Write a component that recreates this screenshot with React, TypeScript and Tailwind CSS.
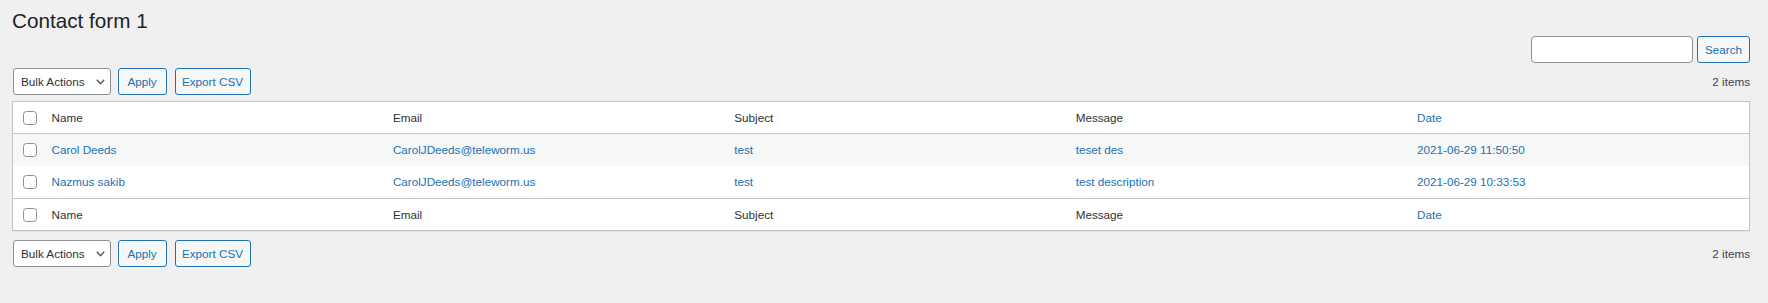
import { ChangeEvent, useState } from 'react';

interface Entry {
  id: number;
  name: string;
  email: string;
  subject: string;
  message: string;
  date: string;
}

const entries: Entry[] = [
  { id: 1, name: 'Carol Deeds', email: 'CarolJDeeds@teleworm.us', subject: 'test', message: 'teset des', date: '2021-06-29 11:50:50' },
  { id: 2, name: 'Nazmus sakib', email: 'CarolJDeeds@teleworm.us', subject: 'test', message: 'test description', date: '2021-06-29 10:33:53' },
];

function Checkbox() {
  return (
    <input
      type="checkbox"
      className="appearance-none block w-[14px] h-[14px] m-0 bg-white border border-[#8c8f94] rounded-[3.5px] cursor-pointer"
    />
  );
}

function Tablenav({ count }: { count: number }) {
  return (
    <div className="flex items-center h-[27px]">
      <div className="relative ml-px mr-[6.5px]">
        <select className="appearance-none w-[98px] h-[27px] pl-[7px] pr-[22px] bg-white border border-[#8c8f94] rounded-[3px] text-[11.7px] text-[#2c3338] outline-none">
          <option>Bulk Actions</option>
          <option>Delete</option>
        </select>
        <svg className="absolute right-[6px] top-[11px] pointer-events-none" width="9" height="6" viewBox="0 0 9 6" fill="none">
          <path d="M0.8 0.8 L4.5 4.8 L8.2 0.8" stroke="#50575e" strokeWidth="1.4" />
        </svg>
      </div>
      <button className="w-[49px] h-[27px] mr-[8px] bg-[#f6f7f7] border border-[#2271b1] rounded-[3px] text-[11.7px] text-[#2271b1]">
        Apply
      </button>
      <button className="w-[76px] h-[27px] bg-[#f6f7f7] border border-[#2271b1] rounded-[3px] text-[11.7px] text-[#2271b1]">
        Export CSV
      </button>
      <span className="ml-auto text-[11.7px] text-[#3c434a]">{count} items</span>
    </div>
  );
}

function HeadRow() {
  return (
    <tr className="h-[32px] text-left text-[#2c3338]">
      <th className="pl-[9.5px] align-middle font-normal"><Checkbox /></th>
      <th className="px-[9px] align-middle font-normal">Name</th>
      <th className="px-[9px] align-middle font-normal">Email</th>
      <th className="px-[9px] align-middle font-normal">Subject</th>
      <th className="px-[9px] align-middle font-normal">Message</th>
      <th className="px-[9px] align-middle font-normal text-[#2271b1]">Date</th>
    </tr>
  );
}

export default function App() {
  const [query, setQuery] = useState('');

  return (
    <div className="min-h-[303px] bg-[#f0f0f1] pl-3 pr-[18px] font-['Liberation_Sans',Arial,sans-serif] text-[#2c3338]">
      <h1 className="pt-[7px] text-[20.7px] leading-[27px] font-normal text-[#1d2327]">Contact form 1</h1>

      {/* search box */}
      <div className="flex justify-end mt-[2px] h-[27px]">
        <input
          type="search"
          value={query}
          onChange={(e: ChangeEvent<HTMLInputElement>) => setQuery(e.target.value)}
          className="w-[162px] h-[27px] px-2 bg-white border border-[#8c8f94] rounded-[4px] text-[11.7px] outline-none"
        />
        <button className="w-[53px] h-[27px] ml-[4px] bg-[#f6f7f7] border border-[#2271b1] rounded-[3px] text-[11.7px] text-[#2271b1]">
          Search
        </button>
      </div>

      <div className="mt-[5px]">
        <Tablenav count={entries.length} />
      </div>

      <table className="mt-[6px] w-full table-fixed border-collapse bg-white border border-[#c3c4c7] shadow-[0_1px_1px_rgba(0,0,0,0.04)] text-[11.7px]">
        <colgroup>
          <col className="w-[30px]" />
          <col />
          <col />
          <col />
          <col />
          <col />
        </colgroup>
        <thead className="border-b border-[#c3c4c7]">
          <HeadRow />
        </thead>
        <tbody>
          {entries.map((e, i) => (
            <tr key={e.id} className={`h-[32.5px] text-[#2271b1] ${i % 2 === 0 ? 'bg-[#f6f7f7]' : 'bg-white'}`}>
              <td className="pl-[9.5px] align-middle"><Checkbox /></td>
              <td className="px-[9px] align-middle"><a href="#">{e.name}</a></td>
              <td className="px-[9px] align-middle"><a href="#">{e.email}</a></td>
              <td className="px-[9px] align-middle"><a href="#">{e.subject}</a></td>
              <td className="px-[9px] align-middle"><a href="#">{e.message}</a></td>
              <td className="px-[9px] align-middle"><a href="#">{e.date}</a></td>
            </tr>
          ))}
        </tbody>
        <tfoot className="border-t border-[#c3c4c7]">
          <HeadRow />
        </tfoot>
      </table>

      <div className="mt-[9px]">
        <Tablenav count={entries.length} />
      </div>
    </div>
  );
}
